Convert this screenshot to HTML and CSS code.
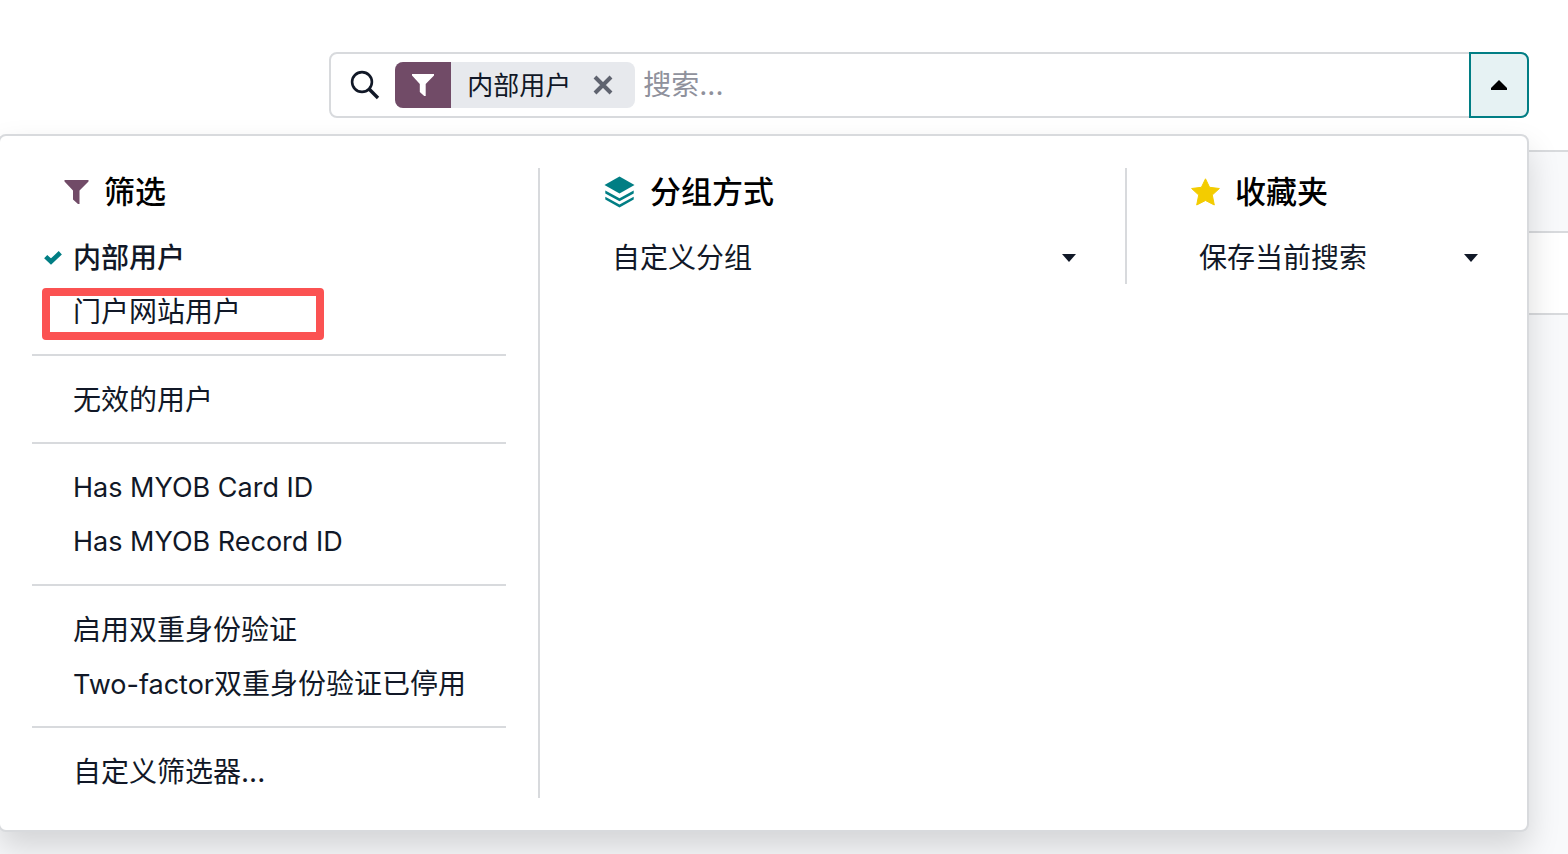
FILE: index.html
```html
<!DOCTYPE html>
<html lang="zh-CN">
<head>
<meta charset="utf-8">
<meta name="viewport" content="width=device-width, initial-scale=1">
<title>用户</title>
<link rel="stylesheet" href="styles.css">
</head>
<body>
<header class="control-panel">
  <div class="search" role="search">
    <label class="search-icon" for="q" aria-label="搜索">
      <svg width="30" height="30" viewBox="0 0 30 30" fill="none" stroke="currentColor"><circle cx="12" cy="12" r="9.900" stroke-width="2.600"/><path d="M18.800 18.800L28 28" stroke-width="3.400"/></svg>
    </label>
    <div class="facet">
      <span class="facet-icon">
        <svg width="24" height="24" viewBox="0 0 24 24" fill="currentColor"><path d="M1 1H23V2.6L14.7 11V23H13.2L8.8 19V11L1 2.6Z"/></svg>
      </span>
      <span class="facet-label">内部用户</span>
      <button class="facet-remove" type="button" aria-label="移除">
        <svg width="20" height="20" viewBox="0 0 20 20" fill="none" stroke="currentColor" stroke-width="4"><path d="M2 2L18 18M18 2L2 18"/></svg>
      </button>
    </div>
    <input class="search-input" id="q" type="text" placeholder="搜索...">
    <button class="search-toggle" type="button" aria-label="切换搜索面板" aria-expanded="true">
      <svg width="16" height="10" viewBox="0 0 16 10" fill="currentColor"><path d="M8 0L16 8V10H0V8Z"/></svg>
    </button>
  </div>

  <div class="search-menu">
    <section class="menu-column filters">
      <h2 class="menu-title">
        <svg class="purple" width="25" height="26" viewBox="0 0 25 26" fill="currentColor"><path d="M0.500 1H24.500V2.600L15.500 11.500V25H14L9 20.500V11.500L0.500 2.600Z"/></svg>
        筛选
      </h2>
      <button class="menu-item selected" type="button" role="menuitemcheckbox" aria-checked="true">
        <svg class="check" width="18" height="14" viewBox="0 0 18 14" fill="none" stroke="currentColor" stroke-width="4.600"><path d="M1.700 5.600L7 10.500L16.300 1.800"/></svg>
        内部用户
      </button>
      <button class="menu-item marked" type="button" role="menuitemcheckbox" aria-checked="false">门户网站用户</button>
      <hr class="divider">
      <button class="menu-item" type="button" role="menuitemcheckbox" aria-checked="false">无效的用户</button>
      <hr class="divider">
      <button class="menu-item" type="button" role="menuitemcheckbox" aria-checked="false"><span class="latin">Has MYOB Card ID</span></button>
      <button class="menu-item" type="button" role="menuitemcheckbox" aria-checked="false"><span class="latin">Has MYOB Record ID</span></button>
      <hr class="divider">
      <button class="menu-item" type="button" role="menuitemcheckbox" aria-checked="false">启用双重身份验证</button>
      <button class="menu-item" type="button" role="menuitemcheckbox" aria-checked="false"><span><span class="latin">Two-factor</span>双重身份验证已停用</span></button>
      <hr class="divider">
      <button class="menu-item" type="button">自定义筛选器...</button>
    </section>

    <section class="menu-column">
      <h2 class="menu-title">
        <svg class="teal" width="31" height="32" viewBox="0 0 31 32" fill="currentColor"><path d="M15.500 0.500L30.500 9L15.500 17.500L0.500 9Z"/><path d="M1.300 14.400L15.500 22.300L29.700 14.400V17.400L15.500 25.300L1.300 17.400Z"/><path d="M1.300 20.700L15.500 28.600L29.700 20.700V23.600L15.500 31.500L1.300 23.600Z"/></svg>
        分组方式
      </h2>
      <button class="menu-item expandable" type="button" aria-expanded="false">
        自定义分组
        <svg width="14" height="8" viewBox="0 0 14 8" fill="currentColor"><path d="M0 0H14L7 8Z"/></svg>
      </button>
    </section>

    <section class="menu-column">
      <h2 class="menu-title">
        <svg class="gold" width="29" height="28" viewBox="0 0 29 28" fill="currentColor" stroke="currentColor" stroke-width="1" stroke-linejoin="round"><path d="M14.500 0.800L18.600 9.300L28.400 10.500L21.300 17L23.300 27L14.500 22.500L5.700 27L7.700 17L0.600 10.500L10.400 9.300Z"/></svg>
        收藏夹
      </h2>
      <button class="menu-item expandable" type="button" aria-expanded="false">
        保存当前搜索
        <svg width="14" height="8" viewBox="0 0 14 8" fill="currentColor"><path d="M0 0H14L7 8Z"/></svg>
      </button>
    </section>
  </div>
</header>
<main class="list">
  <div class="list-head"></div>
  <div class="list-row"></div>
</main>
</body>
</html>
```
FILE: styles.css
```css
*, *::before, *::after { box-sizing: border-box; }

body {
  margin: 0;
  min-height: 100vh;
  display: flex;
  flex-direction: column;
  background: #fff;
  color: #111827;
  font-family: Inter, "Noto Sans CJK SC", sans-serif;
  font-size: 28px;
  line-height: 42px;
}

svg { display: block; flex: none; }

button {
  margin: 0;
  padding: 0;
  border: 0;
  background: none;
  color: inherit;
  font: inherit;
  text-align: left;
  cursor: pointer;
}

.control-panel {
  position: relative;
  padding: 52px 39px 32px 21%;
}

.search {
  display: flex;
  align-items: center;
  height: 66px;
  padding-left: 19px;
  border: 2px solid #d8dadd;
  border-radius: 8px;
}

.search-icon { margin-right: 15px; }

.facet {
  display: flex;
  align-items: center;
  height: 46px;
  border-radius: 8px;
  background: #e7e9ed;
  font-size: 26px;
  overflow: hidden;
}

.facet-icon {
  display: flex;
  align-items: center;
  justify-content: center;
  width: 56px;
  height: 100%;
  margin-right: 16px;
  background: #714b67;
  color: #fff;
}

.facet-label {
  padding-top: 2px;
  white-space: nowrap;
}

.facet-remove {
  padding: 0 22px;
  color: #5f636f;
}

.search-input {
  flex: 1;
  min-width: 0;
  padding: 0 8px;
  border: 0;
  outline: 0;
  background: none;
  color: inherit;
  font: inherit;
}

.search-input::placeholder { color: #8f919c; opacity: 1; }

.search-toggle {
  display: flex;
  align-items: center;
  justify-content: center;
  width: 60px;
  height: 66px;
  margin-right: -2px;
  border: 2px solid #017e84;
  border-radius: 0 8px 8px 0;
  background: #e6f2f3;
  color: #000;
}

.search-menu {
  position: absolute;
  top: 134px;
  left: -2px;
  right: 39px;
  z-index: 10;
  display: grid;
  grid-template-columns: 540fr 587fr 400fr;
  align-items: start;
  padding: 32px 0;
  border: 2px solid #d8dadd;
  border-radius: 8px;
  background: #fff;
  box-shadow: 0 16px 32px rgba(0, 0, 0, 0.15);
}

.menu-column {
  display: flex;
  flex-direction: column;
  padding: 0 32px;
  border-right: 2px solid #d8dadd;
}

.menu-column:last-child { border-right: 0; }

.menu-title {
  display: flex;
  align-items: center;
  gap: 15px;
  height: 48px;
  margin: 0 0 14px;
  padding-left: 32px;
  color: #000;
  font-size: 31px;
  font-weight: 500;
}

.purple { color: #714b67; }
.teal { color: #017e84; }
.gold { color: #f3cc00; }

.menu-item {
  position: relative;
  display: flex;
  align-items: center;
  min-height: 54px;
  padding: 7px 17px 5px 41px;
  white-space: nowrap;
}

.latin {
  font-size: 27px;
  line-height: 36px;
}

.selected { font-weight: 500; }

.check {
  position: absolute;
  left: 12px;
  color: #017e84;
}

.marked::after {
  content: "";
  position: absolute;
  top: 4px;
  left: 10px;
  width: 282px;
  height: 52px;
  border: 8px solid #fb5252;
  border-radius: 4px;
}

.expandable {
  justify-content: space-between;
  padding-left: 40px;
}

.divider {
  width: 100%;
  margin: 16px 0;
  border: 0;
  border-top: 2px solid #d8dadd;
}

.list {
  flex: 1;
  border-top: 2px solid #d8dadd;
  background: #f8f9fb;
}

.list-head,
.list-row {
  height: 81px;
  border-bottom: 2px solid #d8dadd;
}

.list-row {
  height: 82px;
  background: #fff;
}
```
